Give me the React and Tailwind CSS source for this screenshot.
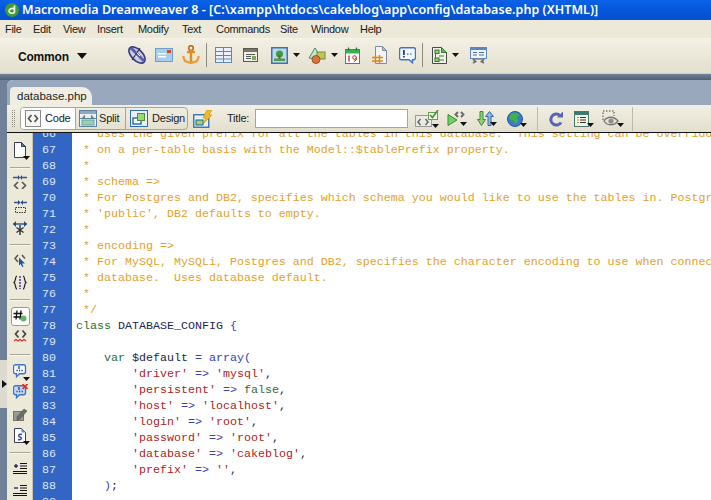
import React from "react";

const Svg = ({ w = 20, h = 20, children, className = "" }) => (
  <svg width={w} height={h} viewBox={`0 0 ${w} ${h}`} className={`shrink-0 block ${className}`}>{children}</svg>
);
const Caret = ({ c = "#111" }) => (
  <svg width="7" height="4" viewBox="0 0 7 4" className="shrink-0 block"><path d="M0 0h7L3.5 4z" fill={c} /></svg>
);

/* insert bar */
const LinkIcon = () => (
  <Svg>
    <ellipse cx="10" cy="10" rx="10" ry="5.500" transform="rotate(45 10 10)" fill="#c9cdea" stroke="#3b3b78" strokeWidth="1.600" />
    <path d="M4 3l13 13" stroke="#5a5fa8" strokeWidth="3" />
    <path d="M7 9l4 4M9 7l4 4" stroke="#f2f2fa" strokeWidth="1" />
    <path d="M13 3L5 15" stroke="#34346c" strokeWidth="1.200" />
  </Svg>
);
const MailIcon = () => (
  <Svg w={18} h={14}>
    <rect x="0.500" y="0.500" width="17" height="13" fill="#a9cdec" stroke="#6d9fc9" />
    <rect x="3" y="5" width="8" height="1.500" fill="#fff" />
    <rect x="3" y="8" width="8" height="1.500" fill="#fff" />
    <rect x="12" y="2" width="4" height="3" fill="#d24a35" />
  </Svg>
);
const AnchorIcon = () => (
  <Svg w={18} h={20}>
    <circle cx="9" cy="3" r="2.300" fill="none" stroke="#b96b16" strokeWidth="1.600" />
    <path d="M5 7h8M9 5v12" stroke="#e08e22" strokeWidth="2.400" />
    <path d="M1 11l2 5 6 2 6-2 2-5" fill="none" stroke="#e9a030" strokeWidth="2.200" />
  </Svg>
);
const TableIcon = () => (
  <Svg w={17} h={16}>
    <rect x="0.500" y="0.500" width="16" height="15" fill="#eaf1fa" stroke="#5f88b8" />
    <path d="M1 4.500h15M1 8.500h15M1 12h15M8.500 1v14" stroke="#5f88b8" />
  </Svg>
);
const LayoutIcon = () => (
  <Svg w={15} h={14}>
    <rect x="0.500" y="0.500" width="14" height="13" fill="#f3f1e6" stroke="#59594f" />
    <rect x="1" y="1" width="13" height="3" fill="#76766b" />
    <path d="M3 6.500h9M3 8.500h5M3 10.500h5" stroke="#555" />
    <rect x="9" y="8" width="4" height="4" fill="#7aa85f" />
  </Svg>
);
const ImageIcon = () => (
  <Svg w={17} h={17}>
    <rect x="0.750" y="0.750" width="15.500" height="15.500" fill="#bcd8ee" stroke="#3f73b0" strokeWidth="1.500" />
    <circle cx="8.500" cy="7" r="3.500" fill="#3d9c3c" />
    <rect x="7.500" y="8" width="2" height="4" fill="#7b5a22" />
    <rect x="3" y="11.500" width="11" height="2.500" fill="#4d9e3e" />
  </Svg>
);
const ShapesIcon = () => (
  <Svg w={18} h={17}>
    <path d="M1 11L7 1l5 8-4 3z" fill="#c3e3d2" stroke="#4d8a6a" />
    <rect x="9" y="5" width="8" height="7" fill="#b9c85a" stroke="#7a8a30" />
    <circle cx="8" cy="12.500" r="4" fill="#d9743f" stroke="#a34f1e" />
  </Svg>
);
const CalendarIcon = () => (
  <Svg w={15} h={17}>
    <rect x="0.500" y="2.500" width="14" height="14" fill="#fff" stroke="#2c9a3d" />
    <rect x="1" y="3" width="13" height="3.500" fill="#3cb04b" />
    <path d="M3.500 0.500v3M11.500 0.500v3" stroke="#1f7a2e" strokeWidth="1.300" />
    <path d="M4 8.500v6" stroke="#c42727" strokeWidth="1.300" />
    <circle cx="9.500" cy="10.500" r="1.800" fill="none" stroke="#c42727" />
    <path d="M11.300 10.500v2.500L9 14.500" fill="none" stroke="#c42727" />
  </Svg>
);
const HashDocIcon = () => (
  <Svg w={15} h={18}>
    <path d="M3.500 0.500h7l4 4v13h-11z" fill="#f3f3f3" stroke="#7d8ca8" />
    <path d="M10.500 0.500v4h4z" fill="#a7c4e6" stroke="#7d8ca8" />
    <path d="M3.500 9v8M7.500 9v8M0 11.500h11M0 15h11" stroke="#d98820" strokeWidth="1.500" />
  </Svg>
);
const CommentIcon = () => (
  <Svg w={17} h={17}>
    <path d="M2.500 0.750h12a2 2 0 0 1 2 2v8a2 2 0 0 1-2 2h-1v3l-3.500-3h-7.500a2 2 0 0 1-2-2v-8a2 2 0 0 1 2-2z" fill="#f4f8fd" stroke="#3f74c4" strokeWidth="1.400" />
    <rect x="4" y="3" width="1.800" height="5" fill="#23408c" />
    <rect x="4" y="9" width="1.800" height="1.500" fill="#23408c" />
    <path d="M8 7h1.500M11 7h1.500" stroke="#23408c" />
  </Svg>
);
const BubbleDots = ({ x = false }) => (
  <Svg w={15} h={15}>
    <path d="M2.500 1.750h8a2 2 0 0 1 2 2v5a2 2 0 0 1-2 2h-4l-3 3v-3h-1a2 2 0 0 1-2-2v-5a2 2 0 0 1 2-2z" fill={x ? "#bcd6f2" : "#f4f8fd"} stroke="#3f74c4" strokeWidth="1.300" />
    <path d="M3.500 7.500h1.200M6 7.500h1.200M8.500 7.500h1.200" stroke="#23408c" strokeWidth="1.300" />
    <path d="M6 3v3" stroke="#23408c" strokeWidth="1.300" />
    {x && <path d="M9.500 0l5 5M14.500 0l-5 5" stroke="#e0301c" strokeWidth="1.700" />}
  </Svg>
);
const TemplateIcon = () => (
  <Svg w={15} h={17}>
    <path d="M0.500 0.500h9l5 5v11h-14z" fill="#f1f1e8" stroke="#4a4a44" />
    <path d="M9.500 0.500v5h5z" fill="#63b958" stroke="#3b7c33" />
    <rect x="3" y="3" width="4" height="3.500" fill="#8fd07a" stroke="#2f7f2f" />
    <rect x="3" y="11" width="4" height="3.500" fill="#8fd07a" stroke="#2f7f2f" />
    <path d="M3.500 6.500v4.500M7 9h5M7 13h5" stroke="#3b7c33" />
  </Svg>
);
const ScriptIcon = () => (
  <Svg w={17} h={17}>
    <rect x="0.500" y="0.500" width="16" height="11" fill="#f0f5fc" stroke="#5e86c4" />
    <rect x="1" y="1" width="15" height="2" fill="#5e86c4" />
    <path d="M3 5.500h4M9 5.500h5M3 8h4M9 8h5" stroke="#4d6da8" />
    <path d="M3 12l2.500 2.500L3 16M14 12l-2.500 2.500L14 16" fill="none" stroke="#6f6f6f" strokeWidth="1.800" />
    <path d="M5 12h7" stroke="#8a8a8a" strokeWidth="1.500" />
  </Svg>
);

/* document toolbar */
const CodeIcon = () => (
  <Svg w={16} h={17}>
    <rect x="0.500" y="0.500" width="15" height="16" fill="#f6f6f3" stroke="#8a8a8a" />
    <path d="M6.500 5L3.500 8.500l3 3.500M9.500 5l3 3.500-3 3.500" fill="none" stroke="#555" strokeWidth="1.700" />
  </Svg>
);
const SplitIcon = () => (
  <Svg w={18} h={17}>
    <rect x="0.500" y="0.500" width="17" height="16" fill="#e8eef5" stroke="#5f7f9f" />
    <rect x="1" y="1" width="16" height="3" fill="#8ea8c4" />
    <path d="M6 4.500L3 8h3zM12 4.500L15 8h-3z" fill="#777" />
    <rect x="3" y="10" width="12" height="5" fill="#9ed39a" stroke="#5fa6c0" />
    <path d="M1 8.500h16" stroke="#5f7f9f" />
  </Svg>
);
const DesignIcon = () => (
  <Svg w={18} h={17}>
    <rect x="0.500" y="0.500" width="17" height="16" fill="#e8f1fa" stroke="#2d6ca8" />
    <rect x="3" y="8" width="8" height="6" fill="#fff" stroke="#1d5f98" strokeWidth="1.300" />
    <rect x="7.500" y="3.500" width="7" height="7" fill="#9ed874" stroke="#4d8f3f" />
  </Svg>
);
const FlashIcon = () => (
  <Svg w={20} h={18}>
    <rect x="0.750" y="4.750" width="15" height="12.500" fill="#e8f1fa" stroke="#2d6ca8" strokeWidth="1.300" />
    <rect x="3" y="10" width="7" height="5" fill="#9ed874" stroke="#1d5f98" />
    <path d="M14 0h5l-3 5h3L10 14l3-6h-3z" fill="#f0bc22" stroke="#c68a14" strokeWidth="0.600" />
  </Svg>
);
const ValidateIcon = () => (
  <Svg w={24} h={18}>
    <rect x="0.500" y="5.500" width="16" height="11" fill="#ecebe3" stroke="#9a9a94" />
    <path d="M5.500 9L3 12l2.500 3M10.500 9L13 12l-2.500 3" fill="none" stroke="#666" strokeWidth="1.500" />
    <rect x="13.500" y="2.500" width="9" height="7" fill="#eef7e7" stroke="#6c9a5c" />
    <path d="M15 5l2.500 2.500L23 0" fill="none" stroke="#3d8c3d" strokeWidth="1.500" />
  </Svg>
);
const PlayIcon = () => (
  <Svg w={18} h={15}>
    <path d="M1 3.500l9 5.500-9 5.500z" fill="#75d05f" stroke="#2f8d3a" />
    <path d="M11 1L8.500 3.500 11 6M14 1l2.500 2.500L14 6" fill="none" stroke="#6a6a6a" strokeWidth="1.900" />
  </Svg>
);
const UpDownIcon = () => (
  <Svg w={18} h={15}>
    <path d="M3 0.500h3v8h2.500L4.500 14.500.5 8.500H3z" fill="#8ed36f" stroke="#3b8a38" />
    <path d="M11 14.500h3v-9h2.500l-4-5-4 5H11z" fill="#8eb8e8" stroke="#2f6aa8" />
  </Svg>
);
const GlobeIcon = () => (
  <Svg w={16} h={16}>
    <circle cx="8" cy="8" r="7.500" fill="#3a7cc8" />
    <path d="M5 2c3-1 6 0 7 2l-2 3 1 3-3 4-1-4-3-1-2-3z" fill="#42b04a" />
    <circle cx="8" cy="8" r="7.500" fill="none" stroke="#23579a" />
  </Svg>
);
const RefreshIcon = () => (
  <Svg w={16} h={16}>
    <path d="M13 11.500a5.500 5.500 0 1 1-1-7" fill="none" stroke="#5a62b4" strokeWidth="3" />
    <path d="M9 6.500h6v-6z" fill="#5a62b4" />
  </Svg>
);
const ListIcon = () => (
  <Svg w={15} h={16}>
    <rect x="0.500" y="0.500" width="14" height="15" fill="#f2f6ea" stroke="#49776b" />
    <rect x="1" y="1" width="13" height="3" fill="#3f7a72" />
    <path d="M6 6.500h6M6 9h6M6 11.500h6" stroke="#333" />
    <path d="M3 6.500h2M3 9h2M3 11.500h2" stroke="#d2942a" />
  </Svg>
);
const EyeIcon = () => (
  <Svg w={19} h={17}>
    <path d="M1 10V1h11v5" fill="none" stroke="#444" strokeDasharray="1.500 1.500" />
    <path d="M2 11c3-5 10-5 14 0-4 5-11 5-14 0z" fill="#e6e4da" stroke="#777" strokeWidth="1.300" />
    <circle cx="9" cy="11" r="2.600" fill="#8e8e88" />
  </Svg>
);

/* left gutter */
const DocIcon = () => (
  <Svg w={12} h={16}>
    <path d="M0.500 0.500h7l4 4v11h-11z" fill="#fff" stroke="#3c3c5c" />
    <path d="M7.500 0.500v4h4z" fill="#4f74c0" stroke="#3c3c5c" />
  </Svg>
);
const CollapseCode = () => (
  <Svg w={14} h={14}>
    <path d="M0 2.500h5M14 2.500H9" stroke="#35588a" strokeWidth="1.300" />
    <path d="M5 0v5l2-2.500zM9 0v5L7 2.500z" fill="#1f4d88" />
    <path d="M5 7L1.500 10.500 5 14M9 7l3.500 3.500L9 14" fill="none" stroke="#555" strokeWidth="1.600" />
  </Svg>
);
const CollapseSel = () => (
  <Svg w={13} h={13}>
    <path d="M0 2.500h4M13 2.500H9" stroke="#35588a" strokeWidth="1.300" />
    <path d="M4 0v5l2.500-2.500zM9 0v5L6.500 2.500z" fill="#1f4d88" />
    <rect x="1.500" y="7.500" width="10" height="5" fill="none" stroke="#333" strokeDasharray="1.500 1" />
  </Svg>
);
const ExpandIcon = () => (
  <Svg w={14} h={14}>
    <path d="M0 3h14" stroke="#35588a" strokeWidth="1.300" />
    <path d="M3 0L0 3l3 3zM11 0l3 3-3 3z" fill="#1f4d88" />
    <path d="M7 4v10M3.500 6.500l7 5M10.500 6.500l-7 5" stroke="#333" strokeWidth="1.400" />
  </Svg>
);
const SelectParent = () => (
  <Svg w={12} h={13}>
    <path d="M4 1L1 4.500 4 8" fill="none" stroke="#555" strokeWidth="1.500" />
    <path d="M8 1l3 3.500" fill="none" stroke="#555" strokeWidth="1.500" />
    <path d="M5 3.500l6 6H8l1.500 3-1.300.500-1.500-3L5 11.500z" fill="#2450a8" />
  </Svg>
);
const BracesIcon = () => (
  <Svg w={14} h={15}>
    <path d="M4 1C2 1 3 6 1 7.500 3 9 2 14 4 14M10 1c2 0 1 5 3 6.500C11 9 12 14 10 14" fill="none" stroke="#222" strokeWidth="1.200" />
    <path d="M7 1v13" stroke="#7c5cc4" strokeWidth="2" strokeDasharray="2 1" />
  </Svg>
);
const HashIcon = () => (
  <Svg w={14} h={12}>
    <path d="M4 0.500l-1 9M8 0.500l-1 9M0.500 3.500h9M0.500 7h9" stroke="#111" strokeWidth="1.300" />
    <circle cx="10.500" cy="8.500" r="3" fill="#65b56a" />
  </Svg>
);
const SyntaxIcon = () => (
  <Svg w={13} h={14}>
    <path d="M4.500 0.500L1.500 4l3 3.500M8.500 0.500L11.500 4l-3 3.500" fill="none" stroke="#444" strokeWidth="1.700" />
    <path d="M0 11l2-1.500 2 1.500 2-1.500 2 1.500 2-1.500 2 1.500" fill="none" stroke="#d42a1c" strokeWidth="1.100" />
  </Svg>
);
const WrenchIcon = () => (
  <Svg w={15} h={14}>
    <rect x="0.500" y="4.500" width="10" height="9" fill="#9a9a94" stroke="#74746e" />
    <path d="M4 10l7-8 3 2-7 8-3 1z" fill="#6f6f6a" stroke="#4f4f4a" strokeWidth="0.600" />
  </Svg>
);
const ScriptDoc = () => (
  <Svg w={12} h={15}>
    <path d="M0.500 0.500h7l4 4v10h-11z" fill="#fff" stroke="#3c3c5c" />
    <path d="M7.500 0.500v4h4z" fill="#5c8ad0" />
    <path d="M8 6.500C4 5.500 4 8.500 6 9s2 3.500-2 2.500" fill="none" stroke="#3448a8" strokeWidth="1.400" />
  </Svg>
);
const IndentIcon = ({ minus = false }) => (
  <Svg w={14} h={12}>
    <path d="M7 1.500h7M7 4h7M7 6.500h7M0 9.500h14M0 11.500h14" stroke="#111" />
    <path d="M1 4h4" stroke="#1a1a60" strokeWidth="1.300" />
    {!minus && <path d="M3 2v4" stroke="#1a1a60" strokeWidth="1.300" />}
  </Svg>
);

const GutterSep = ({ className }) => (
  <div className={`h-[2px] w-[20px] mx-auto border-t border-[#a8a698] bg-[#f6f5ee] ${className}`} />
);
const GutterItem = ({ className = "", children }) => (
  <div className={`relative h-[20px] w-[26px] flex items-center justify-center ${className}`}>{children}</div>
);
const CornerCaret = () => (
  <span className="absolute right-[3px] bottom-[0px]"><Caret /></span>
);

const C = ({ children }) => <span className="text-[#e39f2c]">{children}</span>;
const K = ({ children }) => <span className="text-[#2d6b3c]">{children}</span>;
const S = ({ children }) => <span className="text-[#ad2323]">{children}</span>;
const O = ({ children }) => <span className="text-[#3242b4]">{children}</span>;
const N = ({ children }) => <span className="text-[#232350]">{children}</span>;

const prop = (key, val, kind = "s", comma = ",") => (
  <>
    {"        "}
    <S>{`'${key}'`}</S>
    {" "}
    <O>{"=>"}</O>
    {" "}
    {kind === "s" ? <S>{`'${val}'`}</S> : <K>{val}</K>}
    <N>{comma}</N>
  </>
);

const lines = [
  [66, <C> * uses the given prefix for all the tables in this database.  This setting can be overridden</C>],
  [67, <C> * on a per-table basis with the Model::$tablePrefix property.</C>],
  [68, <C> *</C>],
  [69, <C> * schema =&gt;</C>],
  [70, <C> * For Postgres and DB2, specifies which schema you would like to use the tables in. Postgres defaults to</C>],
  [71, <C> * 'public', DB2 defaults to empty.</C>],
  [72, <C> *</C>],
  [73, <C> * encoding =&gt;</C>],
  [74, <C> * For MySQL, MySQLi, Postgres and DB2, specifies the character encoding to use when connecting to the</C>],
  [75, <C> * database.  Uses database default.</C>],
  [76, <C> *</C>],
  [77, <C> */</C>],
  [78, <><K>class</K> <N>DATABASE_CONFIG</N> <O>{"{"}</O></>],
  [79, ""],
  [80, <>{"    "}<K>var</K> <N>$default</N> <O>=</O> <O>array(</O></>],
  [81, prop("driver", "mysql")],
  [82, prop("persistent", "false", "k")],
  [83, prop("host", "localhost")],
  [84, prop("login", "root")],
  [85, prop("password", "root")],
  [86, prop("database", "cakeblog")],
  [87, prop("prefix", "")],
  [88, <>{"    "}<O>)</O><N>;</N></>],
  [89, ""],
];

export default function App() {
  return (
    <div className="w-[711px] h-[500px] overflow-hidden flex flex-col bg-[#6f8098] font-['Liberation_Sans',sans-serif]">
      {/* title bar */}
      <div className="h-[20px] shrink-0 flex items-center bg-gradient-to-b from-[#0a62e6] via-[#0656dc] to-[#0450cf] pl-[5px]">
        <svg width="14" height="14" viewBox="0 0 14 14" className="shrink-0 block">
          <circle cx="7" cy="7" r="7" fill="#3f9a3a" />
          <path d="M9.500 2.500v7M9.500 6C7 4.500 4 6 4 8s3 3 5.500 1.500" fill="none" stroke="#f4f4e8" strokeWidth="1.700" />
        </svg>
        <span className="ml-[3px] text-white font-['Noto_Sans',sans-serif] text-[12.5px] leading-[20px] font-semibold whitespace-nowrap tracking-[0.05px]">
          Macromedia Dreamweaver 8 - [C:\xampp\htdocs\cakeblog\app\config\database.php (XHTML)]
        </span>
      </div>
      {/* menu */}
      <div className="h-[19px] shrink-0 bg-[#ece9d8] flex items-center pl-[5px] text-[11px] tracking-[-0.3px] leading-[19px] text-[#1a1a1a] border-b border-[#f6f4ea]">
        <span className="w-[28px]">File</span>
        <span className="w-[30px]">Edit</span>
        <span className="w-[34px]">View</span>
        <span className="w-[41px]">Insert</span>
        <span className="w-[44px]">Modify</span>
        <span className="w-[34px]">Text</span>
        <span className="w-[64px]">Commands</span>
        <span className="w-[31px]">Site</span>
        <span className="w-[49px]">Window</span>
        <span className="w-[30px]">Help</span>
      </div>
      {/* insert bar */}
      <div className="h-[35px] shrink-0 flex items-center pb-[2px] bg-gradient-to-b from-[#f3f0e4] to-[#e4e0cf] border-b border-[#d5d1bd]">
        <span className="ml-[18px] w-[50px] mt-[3px] text-[12px] tracking-[-0.2px] font-bold text-[#111] whitespace-nowrap">Common</span>
        <span className="ml-[9px] mt-[1px]"><svg width="10" height="6" viewBox="0 0 10 6" className="block"><path d="M0 0h10L5 6z" fill="#111" /></svg></span>
        <div className="ml-[40px]"><LinkIcon /></div>
        <div className="ml-[8px]"><MailIcon /></div>
        <div className="ml-[9px]"><AnchorIcon /></div>
        <div className="ml-[6px] w-px h-[24px] bg-[#8d8b7e]" />
        <div className="ml-[8px]"><TableIcon /></div>
        <div className="ml-[11px]"><LayoutIcon /></div>
        <div className="ml-[13px]"><ImageIcon /></div>
        <div className="ml-[5px]"><Caret /></div>
        <div className="ml-[8px]"><ShapesIcon /></div>
        <div className="ml-[5px]"><Caret /></div>
        <div className="ml-[7px]"><CalendarIcon /></div>
        <div className="ml-[12px]"><HashDocIcon /></div>
        <div className="ml-[12px]"><CommentIcon /></div>
        <div className="ml-[6px] w-px h-[24px] bg-[#8d8b7e]" />
        <div className="ml-[9px]"><TemplateIcon /></div>
        <div className="ml-[5px]"><Caret /></div>
        <div className="ml-[11px]"><ScriptIcon /></div>
      </div>
      {/* dark strip */}
      <div className="h-[6px] shrink-0 bg-gradient-to-b from-[#73859c] to-[#4f5f72]" />
      {/* body */}
      <div className="flex-1 min-h-0 flex">
        <div className="w-[7px] shrink-0 bg-[#6f8098]">
          <div className="mt-[280px] h-[48px] bg-[#dcdad0] flex items-center">
            <svg width="5" height="8" viewBox="0 0 5 8" className="block ml-[2px]"><path d="M0 0l5 4-5 4z" fill="#111" /></svg>
          </div>
        </div>
        <div className="flex-1 min-w-0 flex flex-col rounded-tl-[6px] overflow-hidden bg-white">
          {/* tabs */}
          <div className="h-[25px] shrink-0 bg-[#9aa8bd] flex items-end pl-[3px]">
            <div className="h-[18px] w-[82px] bg-[#f0eee3] rounded-tl-[4px] rounded-tr-[10px] pl-[7px] text-[11.500px] leading-[18px] text-[#222] whitespace-nowrap">database.php</div>
          </div>
          {/* doc toolbar */}
          <div className="h-[28px] shrink-0 flex items-center bg-gradient-to-b from-[#f2efe4] to-[#e3dfce] border-b border-[#111] text-[11px] tracking-[-0.2px] text-[#222]">
            <div className="ml-[5px] w-[3px] h-[17px] border-x border-dotted border-[#8d8b7e]" />
            <div className="ml-[5px] h-[23px] shrink-0 flex rounded-[4px] border border-[#a9a697] overflow-hidden">
              <div className="w-[54px] bg-white flex items-center pl-[4px] gap-[4px]"><CodeIcon /><span>Code</span></div>
              <div className="w-[50px] border-l border-[#a9a697] flex items-center pl-[3px] gap-[2px]"><SplitIcon /><span>Split</span></div>
              <div className="w-[62px] border-l border-[#a9a697] flex items-center pl-[4px] gap-[4px]"><DesignIcon /><span>Design</span></div>
            </div>
            <div className="ml-[5px]"><FlashIcon /></div>
            <span className="ml-[14px] w-[28px]">Title:</span>
            <div className="w-[153px] h-[19px] shrink-0 bg-white border border-[#8fa8c6]" />
            <div className="ml-[7px] relative"><ValidateIcon /><span className="absolute right-[0px] bottom-[0px]"><Caret /></span></div>
            <div className="ml-[8px] flex items-end"><PlayIcon /><span className="-ml-[5px]"><Caret /></span></div>
            <div className="ml-[10px] flex items-end"><UpDownIcon /><span className="-ml-[5px]"><Caret /></span></div>
            <div className="ml-[10px] flex items-end"><GlobeIcon /><span className="-ml-[3px]"><Caret /></span></div>
            <div className="ml-[10px] w-px h-[24px] bg-[#bdbaa9]" />
            <div className="ml-[10px]"><RefreshIcon /></div>
            <div className="ml-[10px] flex items-end"><ListIcon /><span className="-ml-[2px]"><Caret /></span></div>
            <div className="ml-[8px] flex items-end"><EyeIcon /><span className="-ml-[4px]"><Caret /></span></div>
            <div className="ml-[8px] w-px h-[24px] bg-[#bdbaa9]" />
          </div>
          {/* editor */}
          <div className="flex-1 min-h-0 flex overflow-hidden">
            <div className="w-[26px] shrink-0 bg-[#ece9d8] border-r border-[#c9c6b5] flex flex-col">
              <GutterItem className="mt-[7px]"><DocIcon /><CornerCaret /></GutterItem>
              <GutterSep className="mt-[7px]" />
              <GutterItem className="mt-[3px]"><CollapseCode /></GutterItem>
              <GutterItem className="mt-[5px]"><CollapseSel /></GutterItem>
              <GutterItem className="mt-[1px]"><ExpandIcon /></GutterItem>
              <GutterSep className="mt-[7px]" />
              <GutterItem className="mt-[4px]"><SelectParent /></GutterItem>
              <GutterItem className="mt-[2px]"><BracesIcon /></GutterItem>
              <GutterSep className="mt-[7px]" />
              <GutterItem className="mt-[5px]">
                <div className="w-[19px] h-[19px] bg-white border border-[#9a9a90] rounded-[3px] flex items-center justify-center"><HashIcon /></div>
              </GutterItem>
              <GutterItem className="mt-[1px]"><SyntaxIcon /></GutterItem>
              <GutterSep className="mt-[7px]" />
              <GutterItem className="mt-[5px]"><BubbleDots /><CornerCaret /></GutterItem>
              <GutterItem className="mt-[1px]"><BubbleDots x /></GutterItem>
              <GutterItem className="mt-[2px]"><WrenchIcon /></GutterItem>
              <GutterItem className="mt-[2px]"><ScriptDoc /><CornerCaret /></GutterItem>
              <GutterSep className="mt-[7px]" />
              <GutterItem className="mt-[4px]"><IndentIcon /></GutterItem>
              <GutterItem className="mt-[2px]"><IndentIcon minus /></GutterItem>
            </div>
            <div className="flex-1 min-w-0 overflow-hidden font-['Liberation_Mono',monospace] text-[11.670px] leading-[16px]">
              <div className="-mt-[7px]">
                {lines.map(([n, t]) => (
                  <div key={n} className="flex h-[16px]">
                    <div className="w-[39px] shrink-0 bg-[#3366c4] text-[#dfe8f8] pl-[9px]">{n}</div>
                    <div className="pl-[4px] whitespace-pre text-[#111]">{t}</div>
                  </div>
                ))}
              </div>
            </div>
          </div>
        </div>
      </div>
    </div>
  );
}
